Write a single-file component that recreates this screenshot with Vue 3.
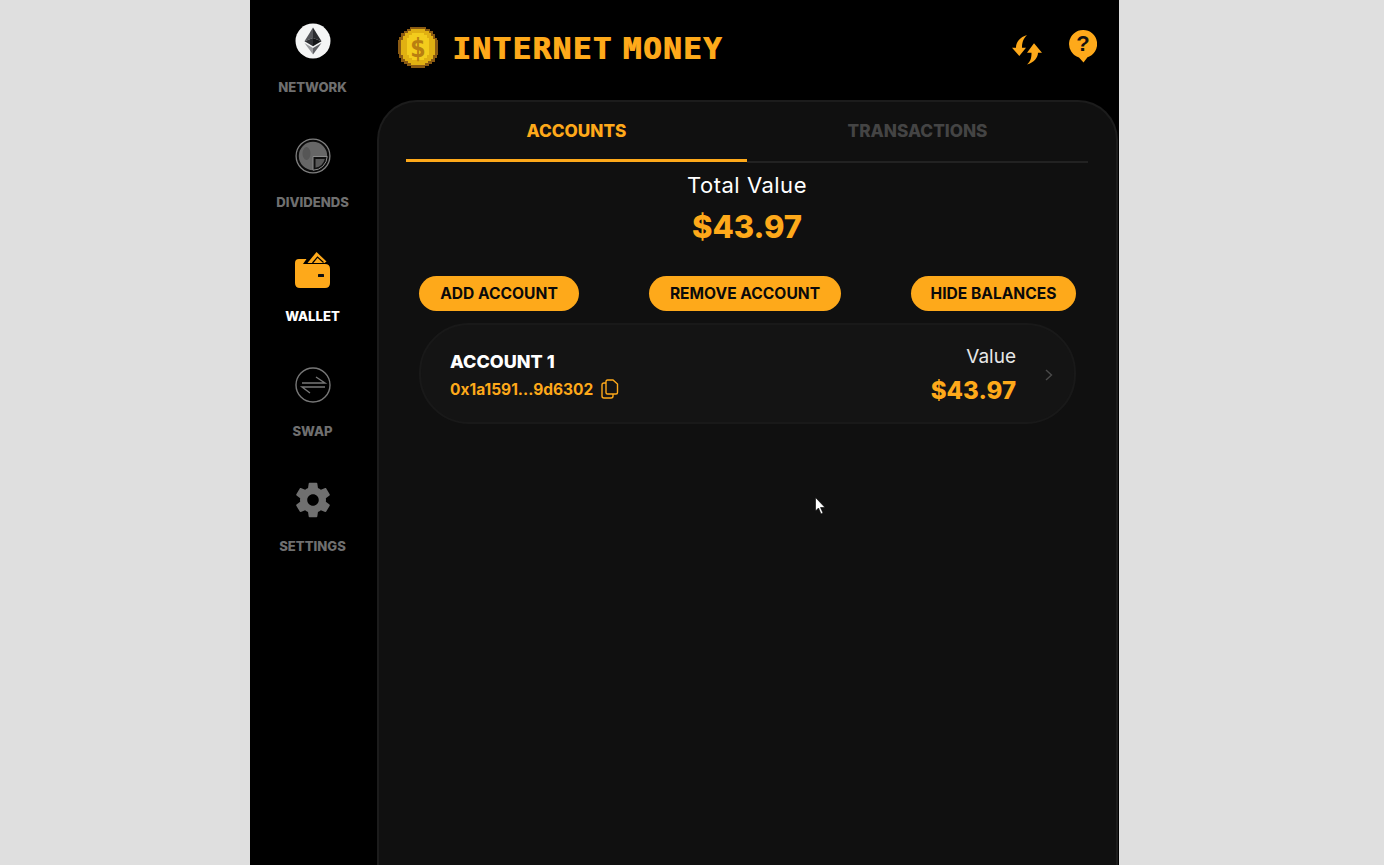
<script setup>
const navItems = [
  { id: 'network', label: 'NETWORK' },
  { id: 'dividends', label: 'DIVIDENDS' },
  { id: 'wallet', label: 'WALLET', active: true },
  { id: 'swap', label: 'SWAP' },
  { id: 'settings', label: 'SETTINGS' },
];
</script>

<template>
  <div class="shell">
    <nav class="sidebar">
      <div v-for="item in navItems" :key="item.id" class="nav-item" :class="{ active: item.active }">
        <svg v-if="item.id === 'network'" class="nav-icon" viewBox="0 0 36 36">
          <circle cx="18" cy="18" r="17.5" fill="#f4f5f5" />
          <path d="M18 4.5 L9.5 18.3 L18 15 Z" fill="#55565a" />
          <path d="M18 4.5 L26.5 18.3 L18 15 Z" fill="#2c2d30" />
          <path d="M9.5 18.3 L18 15 L18 23.2 Z" fill="#2f3034" />
          <path d="M26.5 18.3 L18 15 L18 23.2 Z" fill="#151618" />
          <path d="M9.5 20 L18 25 L18 31.5 Z" fill="#9a9b9e" />
          <path d="M26.5 20 L18 25 L18 31.5 Z" fill="#606165" />
        </svg>
        <svg v-else-if="item.id === 'dividends'" class="nav-icon" viewBox="0 0 36 36">
          <circle cx="18" cy="18" r="16.9" fill="#0a0a0a" stroke="#7f7f7f" stroke-width="1.3" />
          <circle cx="18" cy="18" r="14.2" fill="#666" />
          <ellipse cx="11.5" cy="15.5" rx="4" ry="6.5" fill="#565656" />
          <path d="M18 18.5 H32.2 A14.2 14.2 0 0 1 18 32.2 Z" fill="#101010" stroke="#8a8a8a" stroke-width="1" />
          <path d="M20.5 21 H29.8 A12 12 0 0 1 20.5 29.8 Z" fill="#585858" />
        </svg>
        <svg v-else-if="item.id === 'wallet'" class="nav-icon" viewBox="0 0 36 36">
          <path d="M12.5 11 L21.5 0 L31.5 9.5 L29.5 11 Z" fill="#fea91a" />
          <path d="M17.5 11 L22.5 5 L28.500 10.500" fill="none" stroke="#000" stroke-width="1.2" />
          <path d="M4 7 H11.500 L8 12 H30 Q35 12 35 17 V31 Q35 36 30 36 H5 Q0 36 0 31 V11 Q0 7 4 7 Z" fill="#fea91a" />
          <rect x="23" y="22" width="6" height="3" rx="0.5" fill="#111" />
        </svg>
        <svg v-else-if="item.id === 'swap'" class="nav-icon" viewBox="0 0 36 36" fill="none" stroke="#777" stroke-width="1.4">
          <circle cx="18" cy="18" r="17" />
          <path d="M7 16 H30 L21 10" />
          <path d="M30 20 H7 L15 26" />
        </svg>
        <svg v-else class="nav-icon" viewBox="2 2 20 20">
          <path fill="#707070" d="M19.14 12.94c.04-.3.06-.61.06-.94 0-.32-.02-.64-.07-.94l2.03-1.58c.18-.14.23-.41.12-.61l-1.92-3.32c-.12-.22-.37-.29-.59-.22l-2.39.96c-.5-.38-1.03-.7-1.62-.94l-.36-2.54c-.04-.24-.24-.41-.48-.41h-3.84c-.24 0-.43.17-.47.41l-.36 2.54c-.59.24-1.13.57-1.62.94l-2.39-.96c-.22-.08-.47 0-.59.22L2.74 8.87c-.12.21-.08.47.12.61l2.03 1.58c-.05.3-.09.63-.09.94s.02.64.07.94l-2.03 1.58c-.18.14-.23.41-.12.61l1.92 3.32c.12.22.37.29.59.22l2.39-.96c.5.38 1.03.7 1.62.94l.36 2.54c.05.24.24.41.48.41h3.84c.24 0 .44-.17.47-.41l.36-2.54c.59-.24 1.13-.56 1.62-.94l2.39.96c.22.08.47 0 .59-.22l1.92-3.32c.12-.22.07-.47-.12-.61l-2.01-1.58zM12 15.2c-1.76 0-3.2-1.44-3.2-3.2s1.44-3.2 3.2-3.2 3.2 1.44 3.2 3.2-1.44 3.2-3.2 3.2z" />
        </svg>
        <span class="nav-label">{{ item.label }}</span>
      </div>
    </nav>

    <main class="main">
      <header class="topbar">
        <div class="brand">
          <svg class="coin" viewBox="0 0 40 41" shape-rendering="crispEdges">
            <path fill="#8a5a12" d="M12 0 H28 V2 H32 V4 H35 V7 H37 V11 H39 V13 H40 V28 H39 V31 H37 V35 H34 V37 H31 V39 H27 V41 H13 V39 H9 V37 H6 V35 H3 V31 H1 V27 H0 V13 H1 V10 H3 V6 H6 V4 H9 V2 H12 Z" />
            <path fill="#e0b012" d="M13 2 H27 V4 H31 V6 H33 V9 H35 V12 H37 V28 H35 V32 H33 V34 H30 V36 H27 V38 H13 V36 H10 V34 H7 V32 H5 V28 H3 V13 H5 V9 H7 V6 H10 V4 H13 Z" />
            <path fill="#f3cc1c" d="M14 6 H26 V8 H29 V11 H31 V28 H29 V31 H26 V33 H14 V31 H11 V28 H9 V11 H11 V8 H14 Z" />
            <text x="20" y="30" class="coin-dollar">$</text>
          </svg>
          <span class="brand-name">INTERNET MONEY</span>
        </div>
        <div class="top-actions">
          <svg class="refresh" viewBox="0 0 30 30">
            <path fill="#fea91a" d="M15 0 C8 2 4 7 4 12.700 H0 L7.300 21 L14 12.700 H10 C10 8 11 4 15 0 Z" />
            <path fill="#fea91a" d="M15 29.500 C22 27.500 26 22.500 26 17.700 H30 L22 8.300 L15 17.700 H19.500 C19.500 22 19 26 15 29.500 Z" />
          </svg>
          <svg class="help" viewBox="0 0 28 33">
            <path fill="#fea91a" d="M14 0 A14 14 0 0 1 18.500 27.300 L14.500 32.500 L10 27.400 A14 14 0 0 1 14 0 Z" />
            <text x="14" y="21" class="help-mark">?</text>
          </svg>
        </div>
      </header>

      <section class="panel">
        <div class="tabs">
          <div class="tab tab-active">ACCOUNTS</div>
          <div class="tab">TRANSACTIONS</div>
        </div>

        <div class="total">
          <div class="total-label">Total Value</div>
          <div class="total-amount">$43.97</div>
        </div>

        <div class="actions">
          <button class="btn btn-add">ADD ACCOUNT</button>
          <button class="btn btn-remove">REMOVE ACCOUNT</button>
          <button class="btn btn-hide">HIDE BALANCES</button>
        </div>

        <div class="account">
          <div class="account-info">
            <div class="account-name">ACCOUNT 1</div>
            <div class="account-address">
              <span>0x1a1591...9d6302</span>
              <svg class="copy" viewBox="0 0 18 20" fill="none" stroke="#fea91a" stroke-width="1.4">
                <path d="M5 2.500 Q5 1 6.500 1 H12 L16.500 5 V13.500 Q16.500 15 15 15 H6.500 Q5 15 5 13.500 Z" />
                <path d="M5 4 H3 Q1 4 1 6 V17 Q1 19 3 19 H10 Q12 19 12 17 V15" />
              </svg>
            </div>
          </div>
          <div class="account-value">
            <div class="value-label">Value</div>
            <div class="value-amount">$43.97</div>
          </div>
          <svg class="chevron" viewBox="0 0 8 12" fill="none" stroke="#4a4a4a" stroke-width="1.4">
            <path d="M1 1 L6.500 6 L1 11" />
          </svg>
        </div>

        <svg class="cursor" viewBox="0 0 12 18">
          <path d="M0.500 0.500 V14 L3.500 11 L6 17 L8 16 L5.500 10.500 H10 Z" fill="#fff" stroke="#000" stroke-width="0.6" />
        </svg>
      </section>
    </main>
  </div>
</template>

<style>
html, body {
  margin: 0;
  background: #dfdfdf;
}
</style>

<style scoped>
.shell {
  display: flex;
  width: 869px;
  height: 865px;
  margin-left: 250px;
  background: #000;
  overflow: hidden;
  font-family: Inter, "Liberation Sans", sans-serif;
}

.sidebar {
  display: flex;
  flex-direction: column;
  flex: 0 0 127px;
  box-sizing: border-box;
  padding: 23px 2px 0 0;
}

.nav-item {
  display: flex;
  flex-direction: column;
  align-items: center;
  height: 114.700px;
}

.nav-icon {
  width: 36px;
  height: 36px;
}

.nav-label {
  margin-top: 19px;
  color: #6f6f6f;
  font-size: 13.100px;
  line-height: 18px;
  font-weight: 800;
}

.active .nav-label {
  color: #fff;
}

.main {
  display: flex;
  flex-direction: column;
  flex: 1;
  min-width: 0;
}

.topbar {
  display: flex;
  align-items: center;
  justify-content: space-between;
  flex: 0 0 100px;
  padding: 0 22px 5px 21px;
  box-sizing: border-box;
}

.brand {
  display: flex;
  align-items: center;
  gap: 14px;
}

.coin {
  width: 40px;
  height: 41px;
}

.coin-dollar {
  fill: #b97f10;
  font-family: "DejaVu Sans Mono", monospace;
  font-size: 27px;
  font-weight: 700;
  text-anchor: middle;
}

.brand-name {
  color: #fea91a;
  font-family: "DejaVu Sans Mono", monospace;
  font-size: 31px;
  font-weight: 700;
  letter-spacing: 1.400px;
  word-spacing: -10px;
  line-height: 30px;
  text-shadow: 1px 0 0 #fea91a;
}

.top-actions {
  display: flex;
  align-items: flex-start;
  gap: 27px;
}

.refresh {
  width: 30px;
  height: 30px;
  margin-top: 5px;
}

.help {
  width: 28px;
  height: 33px;
}

.help-mark {
  fill: #111;
  font-family: "Liberation Sans", sans-serif;
  font-size: 22px;
  font-weight: 700;
  text-anchor: middle;
}

.panel {
  position: relative;
  flex: 1;
  margin-right: 1px;
  padding: 0 28px 0 27px;
  background: #101010;
  border: 2px solid #1c1c1c;
  border-bottom: none;
  border-radius: 40px 40px 0 0;
}

.tabs {
  display: grid;
  grid-template-columns: 1fr 1fr;
  align-items: start;
}

.tab {
  height: 61px;
  box-sizing: border-box;
  padding-top: 17px;
  border-bottom: 2px solid #222;
  color: #444;
  font-size: 17.200px;
  line-height: 24px;
  font-weight: 800;
  text-align: center;
}

.tab-active {
  height: 60px;
  border-bottom: 3px solid #fea91a;
  color: #fea91a;
}

.total {
  text-align: center;
}

.total-label {
  margin-top: 9px;
  color: #fff;
  font-size: 22px;
  line-height: 26px;
  font-weight: 400;
  letter-spacing: 0.500px;
}

.total-amount {
  margin-top: 10px;
  color: #fea91a;
  font-size: 31px;
  line-height: 38px;
  font-weight: 800;
}

.actions {
  display: flex;
  justify-content: space-between;
  margin-top: 30px;
  padding: 0 12px 0 13px;
}

.btn {
  height: 35px;
  padding: 0;
  background: #fea91a;
  border: none;
  border-radius: 18px;
  color: #0a0a0a;
  font-family: inherit;
  font-size: 15.600px;
  font-weight: 700;
}

.btn-add {
  width: 160px;
}

.btn-remove {
  width: 192px;
}

.btn-hide {
  width: 165px;
}

.account {
  display: flex;
  align-items: center;
  height: 101px;
  box-sizing: border-box;
  margin: 12px 12px 0 13px;
  padding: 0 21px 0 29px;
  background: #141414;
  border: 2px solid #191919;
  border-radius: 50px;
}

.account-info {
  flex: 1;
  margin-top: 3px;
}

.account-name {
  color: #fff;
  font-size: 18px;
  line-height: 24px;
  font-weight: 800;
}

.account-address {
  display: flex;
  align-items: center;
  gap: 8px;
  margin-top: 6px;
  color: #fea91a;
  font-size: 15.500px;
  line-height: 20px;
  font-weight: 700;
}

.copy {
  width: 18px;
  height: 20px;
  margin-top: -2px;
}

.account-value {
  margin-top: 4px;
  text-align: right;
}

.value-label {
  color: #e6e6e6;
  font-size: 19px;
  line-height: 24px;
}

.value-amount {
  margin-top: 7px;
  color: #fea91a;
  font-size: 24px;
  line-height: 30px;
  font-weight: 800;
}

.chevron {
  width: 8px;
  height: 12px;
  margin-top: 2px;
  margin-left: 29px;
}

.cursor {
  position: absolute;
  left: 436px;
  top: 395px;
  width: 12px;
  height: 18px;
}
</style>
